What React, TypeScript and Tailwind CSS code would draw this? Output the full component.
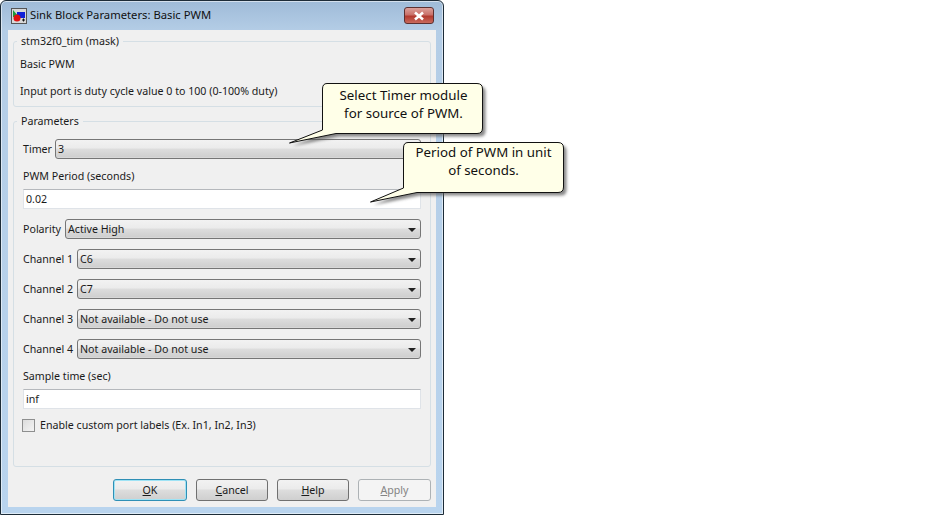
const font = '[font-family:"Noto_Sans",sans-serif]';

function Select({ value, className = '' }: { value: string; className?: string }) {
  return (
    <div
      className={`relative flex h-[20px] min-w-0 flex-1 items-center rounded-[3px] border border-[#767676] bg-[linear-gradient(#f2f2f2_0%,#ebebeb_45%,#dddddd_50%,#cfcfcf_95%,#e4e4e4_100%)] pl-[2px] pt-[2px] ${className}`}
    >
      <span>{value}</span>
      <span className="absolute right-[4px] top-[8px] h-0 w-0 border-x-[4px] border-t-[4px] border-x-transparent border-t-[#222]" />
    </div>
  );
}

function Row({ label, value, gap = 'gap-[4px]' }: { label: string; value: string; gap?: string }) {
  return (
    <div className={`flex items-center ${gap}`}>
      <span className="whitespace-nowrap pt-[2px]">{label}</span>
      <Select value={value} />
    </div>
  );
}

function TextField({ value }: { value: string }) {
  return (
    <div className="flex h-[20px] items-center border border-[#dfe3e8] border-t-[#b5b8bc] bg-white pl-[2px] pt-[2px]">
      {value}
    </div>
  );
}

function GroupBox({ title, className, children }: { title: string; className: string; children: React.ReactNode }) {
  return (
    <div className={`relative rounded-[3px] border border-[#d5dfe5] ${className}`}>
      <span className="absolute left-[3px] top-[-8px] bg-[#f0f0f0] px-[4px] leading-[15px]">{title}</span>
      {children}
    </div>
  );
}

function DialogButton({ className = '', children, disabled }: { className?: string; children: React.ReactNode; disabled?: boolean }) {
  return (
    <div
      className={`flex h-[22px] items-center justify-center rounded-[3px] border pt-[2px] ${
        disabled
          ? 'border-[#adb2b5] bg-[#f4f4f4] text-[#838383]'
          : 'border-[#707070] bg-[linear-gradient(#f2f2f2_0%,#ebebeb_45%,#dddddd_50%,#cfcfcf_100%)]'
      } ${className}`}
    >
      {children}
    </div>
  );
}

function Callout({
  className,
  width,
  height,
  path,
  lines,
  textClass,
}: {
  className: string;
  width: number;
  height: number;
  path: string;
  lines: string[];
  textClass: string;
}) {
  return (
    <div className={`absolute ${className}`}>
      <svg width={width} height={height} className="block overflow-visible">
        <path d={path} fill="#555" opacity="0.7" transform="translate(3 3)" style={{ filter: 'blur(1.5px)' }} />
        <path d={path} fill="#ffffe8" stroke="#111" strokeWidth="1" />
      </svg>
      <div className={`absolute text-center text-[13.3px] leading-[18px] text-[#111] ${textClass}`}>
        {lines.map((line) => (
          <div key={line} className="whitespace-nowrap">{line}</div>
        ))}
      </div>
    </div>
  );
}

export default function App() {
  return (
    <div className={`relative h-[515px] w-[950px] overflow-hidden bg-white text-[10.65px] text-[#1a1a1a] ${font}`}>
      <div className="flex h-[515px] w-[444px] flex-col rounded-t-[6px] border border-[#1d2c38] bg-[linear-gradient(#9fbbd8_0px,#b4cde6_30px,#b9d4ee_100%)] px-[7px] pb-[7px] shadow-[inset_0_0_0_1px_rgba(255,255,255,0.55)]">
        <div className="flex h-[29px] shrink-0 items-center pl-[3px] pr-[2px]">
          <svg width="16" height="16" viewBox="0 0 16 16" className="shrink-0">
            <rect x="0.5" y="0.5" width="15" height="15" fill="#d8d8d8" stroke="#555" />
            <path d="M2 2 L2 9 L8 9 Z" fill="#1a9a3a" />
            <rect x="6" y="4" width="8" height="6" fill="#1020d8" />
            <circle cx="6" cy="10" r="3.5" fill="#e01010" />
            <path d="M11 12 h3 M12.5 10.5 v3" stroke="#111" />
          </svg>
          <span className="ml-[3px] text-[11.25px] text-[#111]">Sink Block Parameters: Basic PWM</span>
          <div className="ml-auto flex h-[17px] w-[30px] items-center justify-center rounded-[3px] border border-[#5c3030] bg-[linear-gradient(#dca09a_0%,#c9716a_45%,#b23a30_55%,#c96a5c_100%)]">
            <svg width="12" height="10" viewBox="0 0 12 10">
              <path d="M2 1.5 L10 8.5 M10 1.5 L2 8.5" stroke="#fff" strokeWidth="2.6" />
            </svg>
          </div>
        </div>

        <div className="flex min-h-0 flex-1 flex-col bg-[#f0f0f0] px-[5px] pt-[11px]">
          <GroupBox title="stm32f0_tim (mask)" className="h-[66px] shrink-0 px-[6px] pt-[15px]">
            <div className="leading-[15px]">Basic PWM</div>
            <div className="mt-[12px] whitespace-nowrap leading-[15px]">Input port is duty cycle value 0 to 100 (0-100% duty)</div>
          </GroupBox>

          <GroupBox title="Parameters" className="mt-[14px] flex h-[346px] shrink-0 flex-col px-[9px] pt-[17px]">
            <div className="flex flex-col gap-[10px]">
              <Row label="Timer" value="3" gap="gap-[3px]" />
              <div className="flex flex-col gap-[6px]">
                <span className="leading-[14px]">PWM Period (seconds)</span>
                <TextField value="0.02" />
              </div>
              <Row label="Polarity" value="Active High" />
              <Row label="Channel 1" value="C6" />
              <Row label="Channel 2" value="C7" />
              <Row label="Channel 3" value="Not available - Do not use" />
              <Row label="Channel 4" value="Not available - Do not use" />
              <div className="flex flex-col gap-[6px]">
                <span className="leading-[14px]">Sample time (sec)</span>
                <TextField value="inf" />
              </div>
              <div className="-mt-[1px] flex items-center gap-[5px]">
                <span className="-ml-[1px] h-[13px] w-[13px] border border-[#8e8f8f] bg-[linear-gradient(135deg,#dcdcdc,#f4f4f4)]" />
                <span>Enable custom port labels (Ex. In1, In2, In3)</span>
              </div>
            </div>
          </GroupBox>

          <div className="mt-[12px] flex justify-end gap-[9px]">
            <DialogButton className="w-[74px] !border-[#2f8fb5] shadow-[inset_0_0_0_1px_#9fe3f5]">
              <u>O</u>K
            </DialogButton>
            <DialogButton className="w-[72px]">
              <u>C</u>ancel
            </DialogButton>
            <DialogButton className="w-[72px]">
              <u>H</u>elp
            </DialogButton>
            <DialogButton className="w-[73px]" disabled>
              <u>A</u>pply
            </DialogButton>
          </div>
        </div>
      </div>

      <Callout
        className="left-[289px] top-[83px]"
        width={194}
        height={61}
        path="M38 0.5 H188 Q193.5 0.5 193.5 6 V45 Q193.5 50.5 188 50.5 H47 L0.5 60 L33.5 47 V6 Q33.5 0.5 38 0.5 Z"
        lines={['Select Timer module', 'for source of PWM.']}
        textClass="left-[34px] top-[3px] w-[161px]"
      />
      <Callout
        className="left-[370px] top-[142px]"
        width={194}
        height={61}
        path="M38 0.5 H188 Q193.5 0.5 193.5 6 V45 Q193.5 50.5 188 50.5 H47 L0.5 60 L33.5 46 V6 Q33.5 0.5 38 0.5 Z"
        lines={['Period of PWM in unit', 'of seconds.']}
        textClass="left-[33px] top-[1px] w-[161px]"
      />
    </div>
  );
}
